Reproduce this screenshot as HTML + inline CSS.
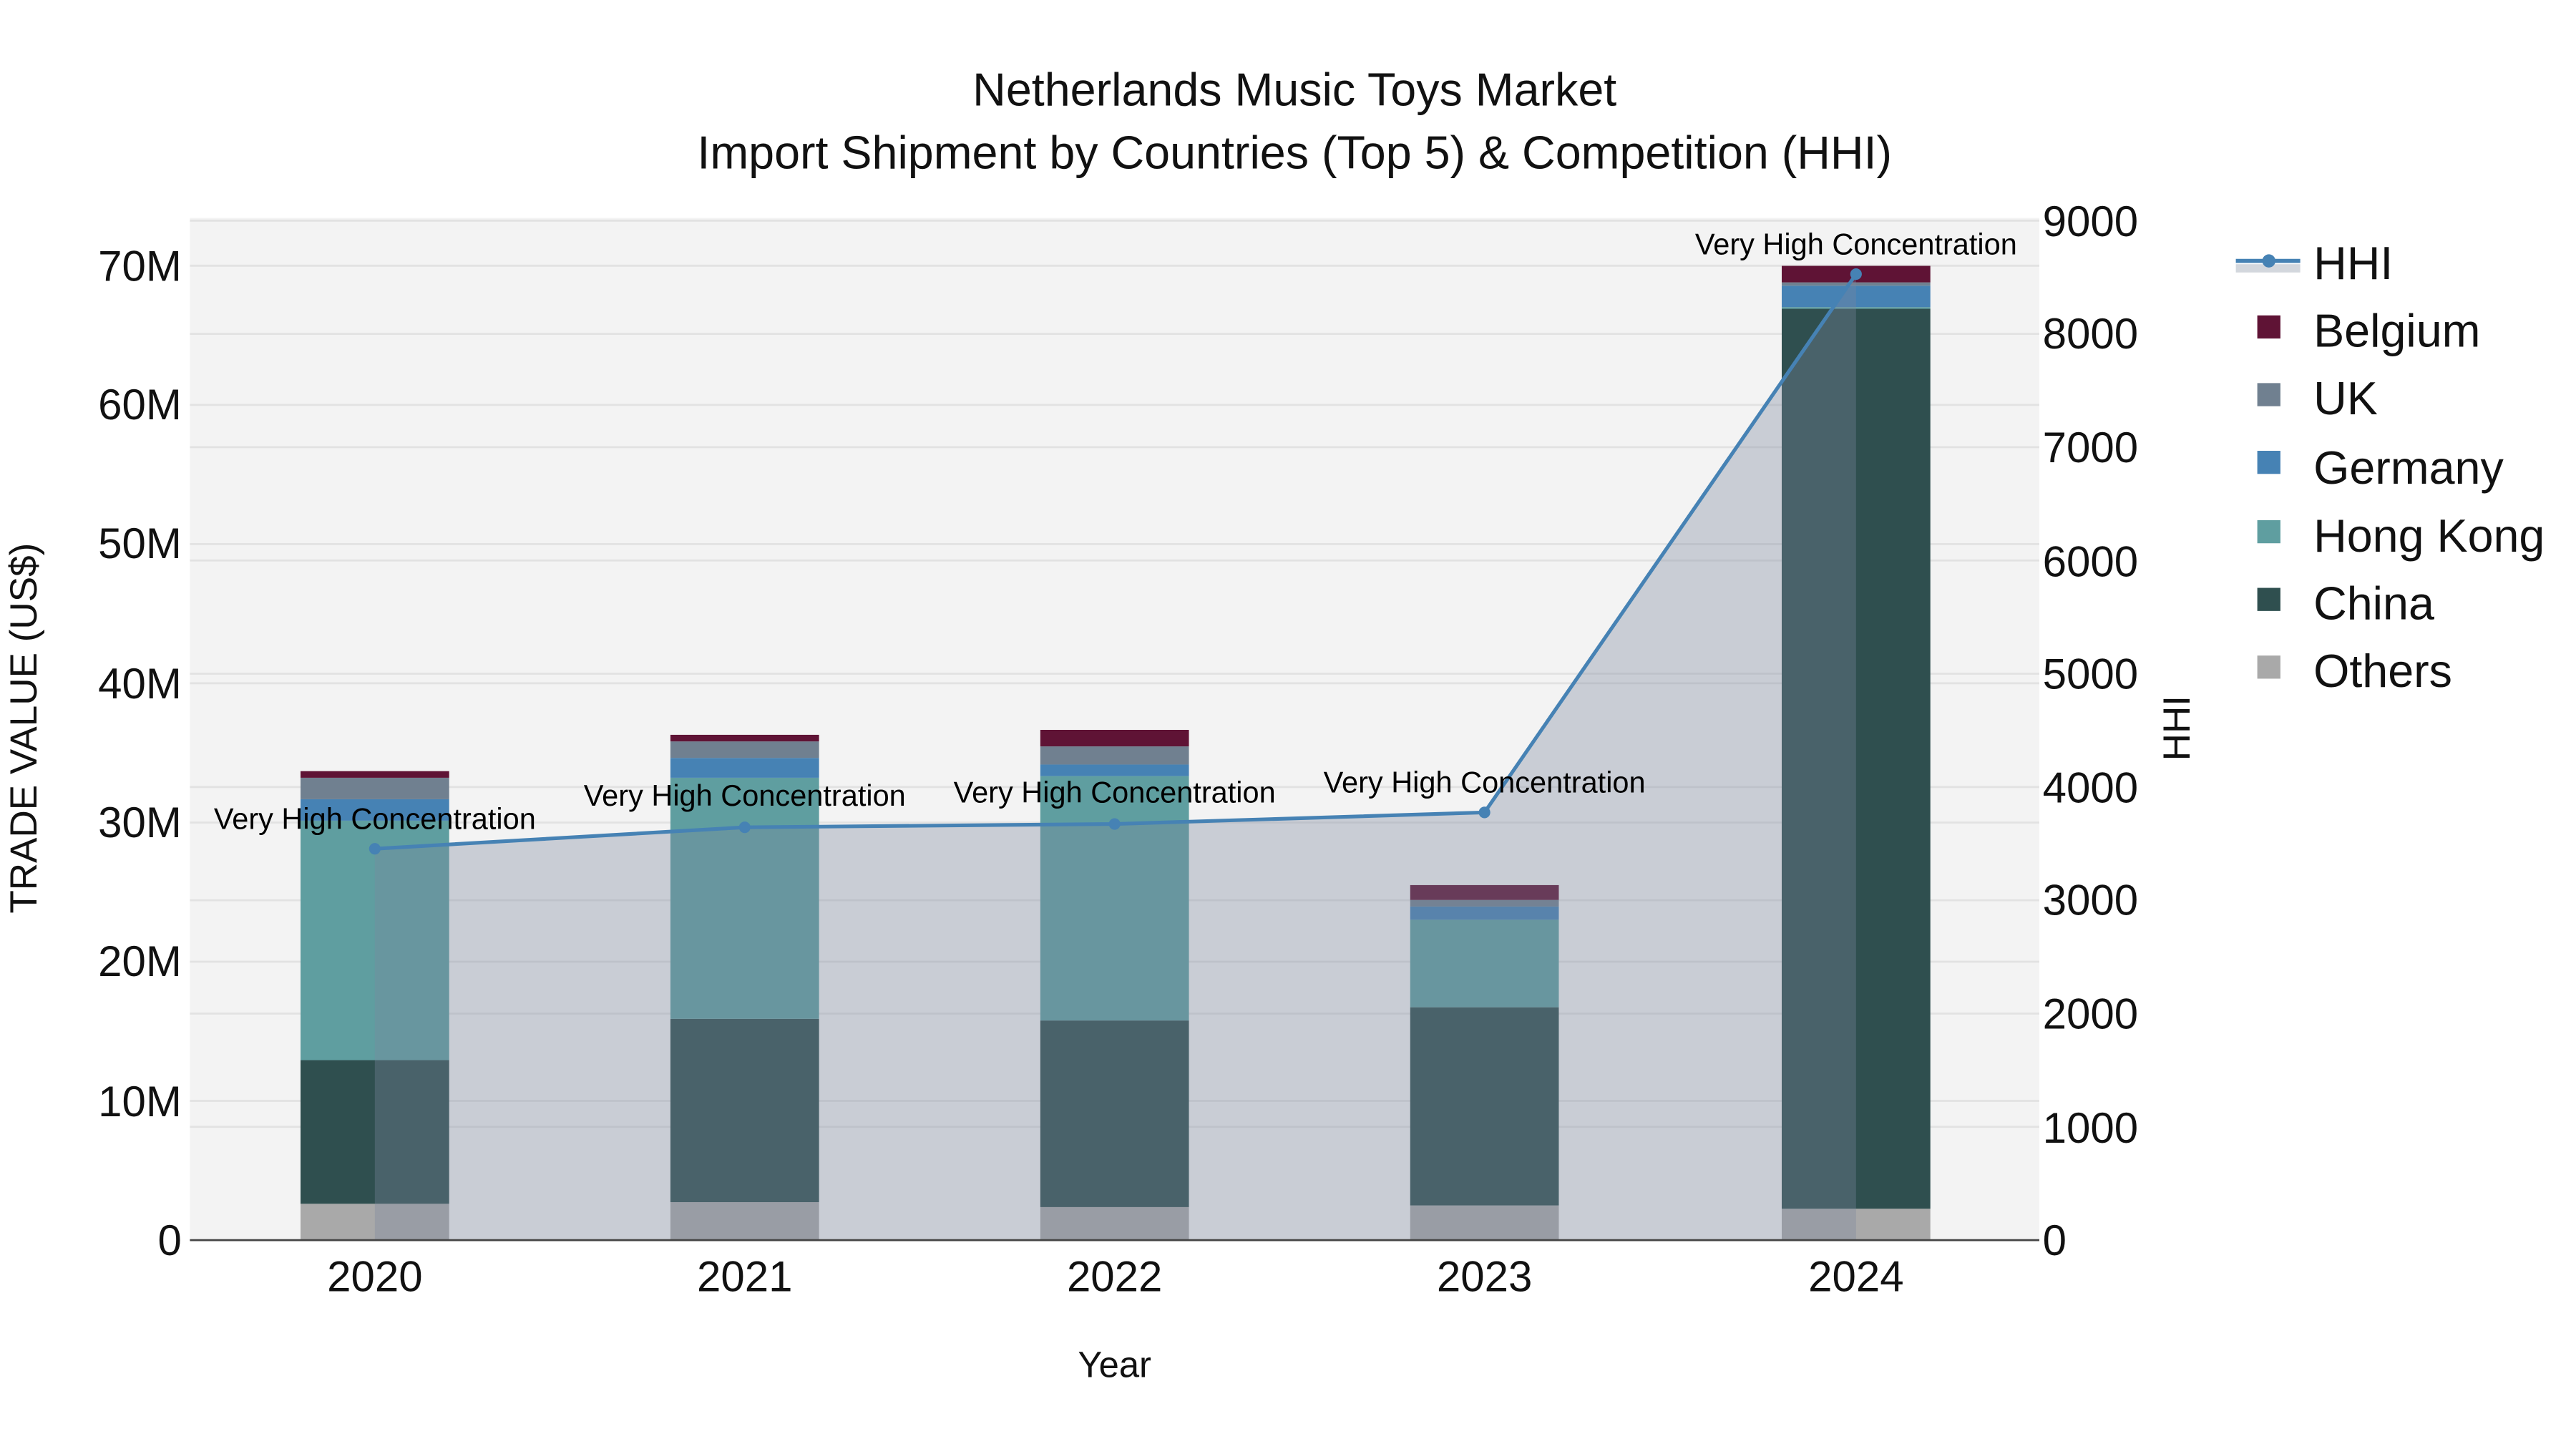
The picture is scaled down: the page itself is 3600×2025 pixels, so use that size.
<!DOCTYPE html>
<html><head><meta charset="utf-8"><style>html,body{margin:0;padding:0;background:#fff}svg{display:block}</style></head>
<body>
<svg width="3600" height="2025" viewBox="0 0 1560 877.5" xmlns="http://www.w3.org/2000/svg" font-family="Liberation Sans, sans-serif">
<rect width="1560" height="877.5" fill="#fff"/>
<rect x="115" y="132" width="1120" height="619" fill="#f3f3f3"/>
<g stroke="#e2e2e2" stroke-width="1.2">
<line x1="115" x2="1235" y1="666.7" y2="666.7"/><line x1="115" x2="1235" y1="582.4" y2="582.4"/><line x1="115" x2="1235" y1="498.1" y2="498.1"/><line x1="115" x2="1235" y1="413.8" y2="413.8"/><line x1="115" x2="1235" y1="329.5" y2="329.5"/><line x1="115" x2="1235" y1="245.2" y2="245.2"/><line x1="115" x2="1235" y1="160.9" y2="160.9"/>
<line x1="115" x2="1235" y1="682.4" y2="682.4"/><line x1="115" x2="1235" y1="613.8" y2="613.8"/><line x1="115" x2="1235" y1="545.2" y2="545.2"/><line x1="115" x2="1235" y1="476.6" y2="476.6"/><line x1="115" x2="1235" y1="408" y2="408"/><line x1="115" x2="1235" y1="339.4" y2="339.4"/><line x1="115" x2="1235" y1="270.8" y2="270.8"/><line x1="115" x2="1235" y1="202.2" y2="202.2"/><line x1="115" x2="1235" y1="133.6" y2="133.6"/>
</g>
<g>
<rect x="182" y="729" width="90" height="22" fill="#a9a9a9"/><rect x="182" y="642" width="90" height="87" fill="#2f4f4f"/><rect x="182" y="497" width="90" height="145" fill="#5f9ea0"/><rect x="182" y="484" width="90" height="13" fill="#4682b4"/><rect x="182" y="471" width="90" height="13" fill="#708090"/><rect x="182" y="467" width="90" height="4" fill="#5f1335"/>
<rect x="406" y="728" width="90" height="23" fill="#a9a9a9"/><rect x="406" y="617" width="90" height="111" fill="#2f4f4f"/><rect x="406" y="471" width="90" height="146" fill="#5f9ea0"/><rect x="406" y="459" width="90" height="12" fill="#4682b4"/><rect x="406" y="449" width="90" height="10" fill="#708090"/><rect x="406" y="445" width="90" height="4" fill="#5f1335"/>
<rect x="630" y="731" width="90" height="20" fill="#a9a9a9"/><rect x="630" y="618" width="90" height="113" fill="#2f4f4f"/><rect x="630" y="470" width="90" height="148" fill="#5f9ea0"/><rect x="630" y="463" width="90" height="7" fill="#4682b4"/><rect x="630" y="452" width="90" height="11" fill="#708090"/><rect x="630" y="442" width="90" height="10" fill="#5f1335"/>
<rect x="854" y="730" width="90" height="21" fill="#a9a9a9"/><rect x="854" y="610" width="90" height="120" fill="#2f4f4f"/><rect x="854" y="557" width="90" height="53" fill="#5f9ea0"/><rect x="854" y="549" width="90" height="8" fill="#4682b4"/><rect x="854" y="545" width="90" height="4" fill="#708090"/><rect x="854" y="536" width="90" height="9" fill="#5f1335"/>
<rect x="1079" y="732" width="90" height="19" fill="#a9a9a9"/><rect x="1079" y="187" width="90" height="545" fill="#2f4f4f"/><rect x="1079" y="186" width="90" height="1" fill="#5f9ea0"/><rect x="1079" y="173" width="90" height="13" fill="#4682b4"/><rect x="1079" y="171" width="90" height="2" fill="#708090"/><rect x="1079" y="161" width="90" height="10" fill="#5f1335"/>
</g>
<polygon points="227,751 227,514 451,501 675,499 899,492 1124,166 1124,751" fill="rgb(123,134,157)" fill-opacity="0.35"/>
<polyline points="227,514 451,501 675,499 899,492 1124,166" fill="none" stroke="#4682b4" stroke-width="2.2"/>
<g fill="#4682b4"><circle cx="227" cy="514" r="3.5"/><circle cx="451" cy="501" r="3.5"/><circle cx="675" cy="499" r="3.5"/><circle cx="899" cy="492" r="3.5"/><circle cx="1124" cy="166" r="3.5"/></g>
<line x1="115" x2="1235" y1="751" y2="751" stroke="#444" stroke-width="1.2"/>
<g font-size="18" fill="#000" text-anchor="middle">
<text x="227" y="502">Very High Concentration</text><text x="451" y="488">Very High Concentration</text><text x="675" y="486">Very High Concentration</text><text x="899" y="480">Very High Concentration</text><text x="1124" y="154">Very High Concentration</text>
</g>
<g font-size="26" fill="#111" text-anchor="end">
<text x="110" y="760">0</text><text x="110" y="676">10M</text><text x="110" y="591">20M</text><text x="110" y="507">30M</text><text x="110" y="423">40M</text><text x="110" y="338">50M</text><text x="110" y="254">60M</text><text x="110" y="170">70M</text>
</g>
<g font-size="26" fill="#111" text-anchor="start">
<text x="1237" y="760">0</text><text x="1237" y="692">1000</text><text x="1237" y="623">2000</text><text x="1237" y="554">3000</text><text x="1237" y="486">4000</text><text x="1237" y="417">5000</text><text x="1237" y="349">6000</text><text x="1237" y="280">7000</text><text x="1237" y="211">8000</text><text x="1237" y="143">9000</text>
</g>
<g font-size="26" fill="#111" text-anchor="middle">
<text x="227" y="782">2020</text><text x="451" y="782">2021</text><text x="675" y="782">2022</text><text x="899" y="782">2023</text><text x="1124" y="782">2024</text>
</g>
<text x="675" y="834" font-size="22" text-anchor="middle" fill="#111">Year</text>
<text transform="translate(22,441) rotate(-90)" font-size="23" text-anchor="middle" fill="#111">TRADE VALUE (US$)</text>
<text transform="translate(1326,441) rotate(-90)" font-size="23" text-anchor="middle" fill="#111">HHI</text>
<text x="784" y="64" font-size="28" text-anchor="middle" fill="#111">Netherlands Music Toys Market</text>
<text x="784" y="102" font-size="28" text-anchor="middle" fill="#111">Import Shipment by Countries (Top 5) &amp; Competition (HHI)</text>
<rect x="1354" y="160" width="39" height="5" fill="#d3d7dd"/>
<line x1="1354" x2="1393" y1="158" y2="158" stroke="#4682b4" stroke-width="2.5"/><circle cx="1374" cy="158" r="4" fill="#4682b4"/>
<g><rect x="1367" y="191" width="14" height="14" fill="#5f1335"/><rect x="1367" y="232" width="14" height="14" fill="#708090"/><rect x="1367" y="273" width="14" height="14" fill="#4682b4"/><rect x="1367" y="315" width="14" height="14" fill="#5f9ea0"/><rect x="1367" y="356" width="14" height="14" fill="#2f4f4f"/><rect x="1367" y="397" width="14" height="14" fill="#a9a9a9"/></g>
<g font-size="28" fill="#111">
<text x="1401" y="169">HHI</text><text x="1401" y="210">Belgium</text><text x="1401" y="251">UK</text><text x="1401" y="293">Germany</text><text x="1401" y="334">Hong Kong</text><text x="1401" y="375">China</text><text x="1401" y="416">Others</text>
</g>
</svg>
</body></html>
